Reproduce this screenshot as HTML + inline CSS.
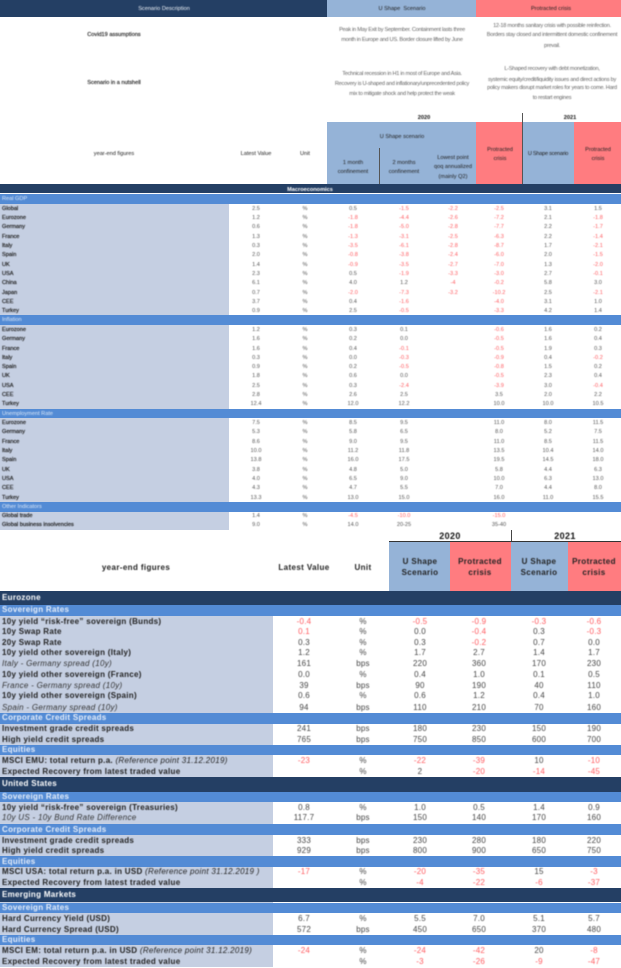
<!DOCTYPE html>
<html><head><meta charset="utf-8"><style>
html,body{margin:0;padding:0;background:#fff}
#p{position:relative;width:621px;height:968px;overflow:hidden;background:#fff;font-family:"Liberation Sans",sans-serif}
.b{position:absolute}
#t{position:absolute;left:0;top:0;width:621px;height:530px;filter:blur(.55px);font-size:5.6px;color:#555}
#s{position:absolute;left:0;top:0;width:621px;height:968px;filter:blur(.42px);font-size:8px;color:#444;letter-spacing:.22px}
.x{position:absolute;height:10px;line-height:10px;white-space:nowrap;text-align:center;width:160px;margin-left:-80px}
.q{letter-spacing:-.26px;color:#666}
.lt{position:absolute;height:10px;line-height:10px;white-space:nowrap;left:2px;color:#333}
.r{position:absolute;left:0;width:621px;height:10px}
.r span{position:absolute;top:0;height:10px;line-height:10px;white-space:nowrap;text-align:center;width:60px}
.r b{position:absolute;left:2px;top:0;line-height:10px;white-space:nowrap;font-weight:normal;color:#222}
#t .r b{-webkit-text-stroke:.2px #222}
#s .r b{font-weight:bold;color:#222;letter-spacing:.29px}
#s .r i{position:absolute;left:2px;top:0;line-height:10px;white-space:nowrap;color:#333;letter-spacing:.29px}
#s .r i em{font-style:italic;font-weight:normal}
#s .x{letter-spacing:.38px}
.a{left:226px}.c{left:275px}.d{left:323px}.e{left:374px}.f{left:423px}.g{left:469px}.h{left:518px}.k{left:568px}
.A{left:274px}.C{left:333px}.D{left:390px}.E{left:449px}.F{left:509px}.G{left:564px}
.n{color:#ff5a5f}
.W{color:#fff;font-weight:bold;letter-spacing:.3px}
</style></head><body><div id="p">

<div class="b" style="left:0;top:0;width:327px;height:17px;background:#243f64"></div>
<div class="b" style="left:327px;top:0;width:149px;height:17px;background:#95b3d7"></div>
<div class="b" style="left:476px;top:0;width:145px;height:17px;background:#ff7c80"></div>
<div class="b" style="left:327px;top:122px;width:149px;height:62px;background:#95b3d7"></div>
<div class="b" style="left:476px;top:122px;width:46px;height:62px;background:#ff7c80"></div>
<div class="b" style="left:522px;top:122px;width:52px;height:62px;background:#95b3d7"></div>
<div class="b" style="left:574px;top:122px;width:47px;height:62px;background:#ff7c80"></div>
<div class="b" style="left:521.5px;top:113px;width:1px;height:72px;background:#555"></div>
<div class="b" style="left:378.5px;top:148px;width:1px;height:37px;background:#555"></div>
<div class="b" style="left:0;top:184px;width:621px;height:9px;background:#243f64"></div>
<div class="b" style="left:0;top:204px;width:229px;height:326px;background:#c5cfe2"></div>
<div class="b" style="left:0;top:193.5px;width:621px;height:10px;background:#538bd5"></div>
<div class="b" style="left:0;top:315px;width:621px;height:9.5px;background:#538bd5"></div>
<div class="b" style="left:0;top:408.5px;width:621px;height:9.5px;background:#538bd5"></div>
<div class="b" style="left:0;top:502px;width:621px;height:9.5px;background:#538bd5"></div>

<div id="t">
<div class="x" style="left:164px;top:4px;color:#eef2f8">Scenario Description</div>
<div class="x" style="left:402px;top:4px;color:#222">U Shape&nbsp; Scenario</div>
<div class="x" style="left:551px;top:4px;color:#222">Protracted crisis</div>
<div class="x" style="left:114px;top:30px;color:#222;-webkit-text-stroke:.15px #222">Covid19 assumptions</div>
<div class="x q" style="left:402px;top:25px">Peak in May Exit by September. Containment lasts three</div>
<div class="x q" style="left:402px;top:35px">month in Europe and US. Border closure lifted by June</div>
<div class="x q" style="left:552px;top:21px">12-18 months sanitary crisis with possible reinfection.</div>
<div class="x q" style="left:552px;top:30px">Borders stay closed and intermittent domestic confinement</div>
<div class="x q" style="left:552px;top:41px">prevail.</div>
<div class="x" style="left:114px;top:78px;color:#222;-webkit-text-stroke:.15px #222">Scenario in a nutshell</div>
<div class="x q" style="left:402px;top:69px">Technical recession in H1 in most of Europe and Asia.</div>
<div class="x q" style="left:402px;top:79px">Recovery is U-shaped and inflationary/unprecedented policy</div>
<div class="x q" style="left:402px;top:89px">mix to mitigate shock and help protect the weak</div>
<div class="x q" style="left:552px;top:64px">L-Shaped recovery with debt monetization,</div>
<div class="x q" style="left:552px;top:75px">systemic equity/credit/liquidity issues and direct actions by</div>
<div class="x q" style="left:552px;top:83px">policy makers disrupt market roles for years to come. Hard</div>
<div class="x q" style="left:552px;top:93px">to restart engines</div>
<div class="x" style="left:424px;top:113px;color:#111;font-weight:bold">2020</div>
<div class="x" style="left:570px;top:113px;color:#111;font-weight:bold">2021</div>
<div class="x" style="left:402px;top:132px;color:#222">U Shape scenario</div>
<div class="x" style="left:353px;top:158px;color:#222">1 month</div>
<div class="x" style="left:353px;top:167px;color:#222">confinement</div>
<div class="x" style="left:404px;top:158px;color:#222">2 months</div>
<div class="x" style="left:404px;top:167px;color:#222">confinement</div>
<div class="x" style="left:453px;top:153px;color:#222">Lowest point</div>
<div class="x" style="left:453px;top:162px;color:#222">qoq annualized</div>
<div class="x" style="left:453px;top:172px;color:#222">(mainly Q2)</div>
<div class="x" style="left:500px;top:145px;color:#222">Protracted</div>
<div class="x" style="left:500px;top:154px;color:#222">crisis</div>
<div class="x q" style="left:548px;top:149px;color:#222">U Shape scenario</div>
<div class="x" style="left:598px;top:145px;color:#222">Protracted</div>
<div class="x" style="left:598px;top:154px;color:#222">crisis</div>
<div class="x" style="left:114px;top:149px;color:#222">year-end figures</div>
<div class="x" style="left:256px;top:149px;color:#222">Latest Value</div>
<div class="x" style="left:305px;top:149px;color:#222">Unit</div>
<div class="x" style="left:310px;top:185px;color:#fff;font-weight:bold">Macroeconomics</div>

<div class="lt" style="top:194px;color:#dce8f8">Real GDP</div>
<div class="r" style="top:204px"><b>Global</b><span class="a">2.5</span><span class="c">%</span><span class="d">0.5</span><span class="e n">-1.5</span><span class="f n">-2.2</span><span class="g n">-2.5</span><span class="h">3.1</span><span class="k">1.5</span></div>
<div class="r" style="top:213px"><b>Eurozone</b><span class="a">1.2</span><span class="c">%</span><span class="d n">-1.8</span><span class="e n">-4.4</span><span class="f n">-2.6</span><span class="g n">-7.2</span><span class="h">2.1</span><span class="k n">-1.8</span></div>
<div class="r" style="top:222px"><b>Germany</b><span class="a">0.6</span><span class="c">%</span><span class="d n">-1.8</span><span class="e n">-5.0</span><span class="f n">-2.8</span><span class="g n">-7.7</span><span class="h">2.2</span><span class="k n">-1.7</span></div>
<div class="r" style="top:232px"><b>France</b><span class="a">1.3</span><span class="c">%</span><span class="d n">-1.3</span><span class="e n">-3.1</span><span class="f n">-2.5</span><span class="g n">-6.3</span><span class="h">2.2</span><span class="k n">-1.4</span></div>
<div class="r" style="top:241px"><b>Italy</b><span class="a">0.3</span><span class="c">%</span><span class="d n">-3.5</span><span class="e n">-6.1</span><span class="f n">-2.8</span><span class="g n">-8.7</span><span class="h">1.7</span><span class="k n">-2.1</span></div>
<div class="r" style="top:250px"><b>Spain</b><span class="a">2.0</span><span class="c">%</span><span class="d n">-0.8</span><span class="e n">-3.8</span><span class="f n">-2.4</span><span class="g n">-6.0</span><span class="h">2.0</span><span class="k n">-1.5</span></div>
<div class="r" style="top:260px"><b>UK</b><span class="a">1.4</span><span class="c">%</span><span class="d n">-0.9</span><span class="e n">-3.5</span><span class="f n">-2.7</span><span class="g n">-7.0</span><span class="h">1.3</span><span class="k n">-2.0</span></div>
<div class="r" style="top:269px"><b>USA</b><span class="a">2.3</span><span class="c">%</span><span class="d">0.5</span><span class="e n">-1.9</span><span class="f n">-3.3</span><span class="g n">-3.0</span><span class="h">2.7</span><span class="k n">-0.1</span></div>
<div class="r" style="top:278px"><b>China</b><span class="a">6.1</span><span class="c">%</span><span class="d">4.0</span><span class="e">1.2</span><span class="f n">-4</span><span class="g n">-0.2</span><span class="h">5.8</span><span class="k">3.0</span></div>
<div class="r" style="top:288px"><b>Japan</b><span class="a">0.7</span><span class="c">%</span><span class="d n">-2.0</span><span class="e n">-7.3</span><span class="f n">-3.2</span><span class="g n">-10.2</span><span class="h">2.5</span><span class="k n">-2.1</span></div>
<div class="r" style="top:297px"><b>CEE</b><span class="a">3.7</span><span class="c">%</span><span class="d">0.4</span><span class="e n">-1.6</span><span class="g n">-4.0</span><span class="h">3.1</span><span class="k">1.0</span></div>
<div class="r" style="top:306px"><b>Turkey</b><span class="a">0.9</span><span class="c">%</span><span class="d">2.5</span><span class="e n">-0.5</span><span class="g n">-3.3</span><span class="h">4.2</span><span class="k">1.4</span></div>

<div class="lt" style="top:315px;color:#dce8f8">Inflation</div>
<div class="r" style="top:325px"><b>Eurozone</b><span class="a">1.2</span><span class="c">%</span><span class="d">0.3</span><span class="e">0.1</span><span class="g n">-0.6</span><span class="h">1.6</span><span class="k">0.2</span></div>
<div class="r" style="top:334px"><b>Germany</b><span class="a">1.6</span><span class="c">%</span><span class="d">0.2</span><span class="e">0.0</span><span class="g n">-0.5</span><span class="h">1.6</span><span class="k">0.4</span></div>
<div class="r" style="top:344px"><b>France</b><span class="a">1.6</span><span class="c">%</span><span class="d">0.4</span><span class="e n">-0.1</span><span class="g n">-0.5</span><span class="h">1.9</span><span class="k">0.3</span></div>
<div class="r" style="top:353px"><b>Italy</b><span class="a">0.3</span><span class="c">%</span><span class="d">0.0</span><span class="e n">-0.3</span><span class="g n">-0.9</span><span class="h">0.4</span><span class="k n">-0.2</span></div>
<div class="r" style="top:362px"><b>Spain</b><span class="a">0.9</span><span class="c">%</span><span class="d">0.2</span><span class="e n">-0.5</span><span class="g n">-0.8</span><span class="h">1.5</span><span class="k">0.2</span></div>
<div class="r" style="top:371px"><b>UK</b><span class="a">1.8</span><span class="c">%</span><span class="d">0.6</span><span class="e">0.0</span><span class="g n">-0.5</span><span class="h">2.3</span><span class="k">0.4</span></div>
<div class="r" style="top:381px"><b>USA</b><span class="a">2.5</span><span class="c">%</span><span class="d">0.3</span><span class="e n">-2.4</span><span class="g n">-3.9</span><span class="h">3.0</span><span class="k n">-0.4</span></div>
<div class="r" style="top:390px"><b>CEE</b><span class="a">2.8</span><span class="c">%</span><span class="d">2.6</span><span class="e">2.5</span><span class="g">3.5</span><span class="h">2.0</span><span class="k">2.2</span></div>
<div class="r" style="top:399px"><b>Turkey</b><span class="a">12.4</span><span class="c">%</span><span class="d">12.0</span><span class="e">12.2</span><span class="g">10.0</span><span class="h">10.0</span><span class="k">10.5</span></div>

<div class="lt" style="top:409px;color:#dce8f8">Unemployment Rate</div>
<div class="r" style="top:418px"><b>Eurozone</b><span class="a">7.5</span><span class="c">%</span><span class="d">8.5</span><span class="e">9.5</span><span class="g">11.0</span><span class="h">8.0</span><span class="k">11.5</span></div>
<div class="r" style="top:427px"><b>Germany</b><span class="a">5.3</span><span class="c">%</span><span class="d">5.8</span><span class="e">6.5</span><span class="g">8.0</span><span class="h">5.2</span><span class="k">7.5</span></div>
<div class="r" style="top:437px"><b>France</b><span class="a">8.6</span><span class="c">%</span><span class="d">9.0</span><span class="e">9.5</span><span class="g">11.0</span><span class="h">8.5</span><span class="k">11.5</span></div>
<div class="r" style="top:446px"><b>Italy</b><span class="a">10.0</span><span class="c">%</span><span class="d">11.2</span><span class="e">11.8</span><span class="g">13.5</span><span class="h">10.4</span><span class="k">14.0</span></div>
<div class="r" style="top:455px"><b>Spain</b><span class="a">13.8</span><span class="c">%</span><span class="d">16.0</span><span class="e">17.5</span><span class="g">19.5</span><span class="h">14.5</span><span class="k">18.0</span></div>
<div class="r" style="top:465px"><b>UK</b><span class="a">3.8</span><span class="c">%</span><span class="d">4.8</span><span class="e">5.0</span><span class="g">5.8</span><span class="h">4.4</span><span class="k">6.3</span></div>
<div class="r" style="top:474px"><b>USA</b><span class="a">4.0</span><span class="c">%</span><span class="d">6.5</span><span class="e">9.0</span><span class="g">10.0</span><span class="h">6.3</span><span class="k">13.0</span></div>
<div class="r" style="top:483px"><b>CEE</b><span class="a">4.3</span><span class="c">%</span><span class="d">4.7</span><span class="e">5.5</span><span class="g">7.0</span><span class="h">4.4</span><span class="k">8.0</span></div>
<div class="r" style="top:493px"><b>Turkey</b><span class="a">13.3</span><span class="c">%</span><span class="d">13.0</span><span class="e">15.0</span><span class="g">16.0</span><span class="h">11.0</span><span class="k">15.5</span></div>

<div class="lt" style="top:502px;color:#dce8f8">Other Indicators</div>
<div class="r" style="top:511px"><b>Global trade</b><span class="a">1.4</span><span class="c">%</span><span class="d n">-4.5</span><span class="e n">-10.0</span><span class="g n">-15.0</span></div>
<div class="r" style="top:520px"><b>Global business insolvencies</b><span class="a">9.0</span><span class="c">%</span><span class="d">14.0</span><span class="e">20-25</span><span class="g">35-40</span></div>
</div>

<div class="b" style="left:0;top:591px;width:273px;height:376px;background:#c5cfe2"></div>
<div class="b" style="left:389px;top:542px;width:60.5px;height:49px;background:#95b3d7"></div>
<div class="b" style="left:449.5px;top:542px;width:61px;height:49px;background:#ff7c80"></div>
<div class="b" style="left:510.5px;top:542px;width:57px;height:49px;background:#95b3d7"></div>
<div class="b" style="left:567.5px;top:542px;width:53.5px;height:49px;background:#ff7c80"></div>
<div class="b" style="left:389px;top:541px;width:232px;height:1px;background:#333"></div>
<div class="b" style="left:510.5px;top:530px;width:1px;height:11px;background:#444"></div>
<div class="b" style="left:0;top:591px;width:621px;height:13.5px;background:#243f64"></div>
<div class="b" style="left:0;top:604.5px;width:621px;height:11px;background:#538bd5"></div>
<div class="b" style="left:0;top:712.5px;width:621px;height:11px;background:#538bd5"></div>
<div class="b" style="left:0;top:744.5px;width:621px;height:10px;background:#538bd5"></div>
<div class="b" style="left:0;top:776.5px;width:621px;height:15px;background:#243f64"></div>
<div class="b" style="left:0;top:791.5px;width:621px;height:10px;background:#538bd5"></div>
<div class="b" style="left:0;top:824px;width:621px;height:10.5px;background:#538bd5"></div>
<div class="b" style="left:0;top:856px;width:621px;height:10.5px;background:#538bd5"></div>
<div class="b" style="left:0;top:887.5px;width:621px;height:14.5px;background:#243f64"></div>
<div class="b" style="left:0;top:902.5px;width:621px;height:10px;background:#538bd5"></div>
<div class="b" style="left:0;top:934.5px;width:621px;height:10px;background:#538bd5"></div>

<div id="s">
<div class="x" style="left:450px;top:531px;font-weight:bold;color:#111;font-size:9px">2020</div>
<div class="x" style="left:565px;top:531px;font-weight:bold;color:#111;font-size:9px">2021</div>
<div class="x" style="left:136px;top:563px;font-weight:bold;color:#222">year-end figures</div>
<div class="x" style="left:304px;top:563px;font-weight:bold;color:#222">Latest Value</div>
<div class="x" style="left:363px;top:563px;font-weight:bold;color:#222">Unit</div>
<div class="x" style="left:420px;top:557px;font-weight:bold;color:#222">U Shape</div>
<div class="x" style="left:420px;top:568px;font-weight:bold;color:#222">Scenario</div>
<div class="x" style="left:480px;top:557px;font-weight:bold;color:#222">Protracted</div>
<div class="x" style="left:480px;top:568px;font-weight:bold;color:#222">crisis</div>
<div class="x" style="left:539px;top:557px;font-weight:bold;color:#222">U Shape</div>
<div class="x" style="left:539px;top:568px;font-weight:bold;color:#222">Scenario</div>
<div class="x" style="left:594px;top:557px;font-weight:bold;color:#222">Protracted</div>
<div class="x" style="left:594px;top:568px;font-weight:bold;color:#222">crisis</div>

<div class="lt W" style="top:593px">Eurozone</div>
<div class="lt W" style="top:605px;color:#e6eefa">Sovereign Rates</div>
<div class="r" style="top:617px"><b>10y yield “risk-free” sovereign (Bunds)</b><span class="A n">-0.4</span><span class="C">%</span><span class="D n">-0.5</span><span class="E n">-0.9</span><span class="F n">-0.3</span><span class="G n">-0.6</span></div>
<div class="r" style="top:627px"><b>10y Swap Rate</b><span class="A n">0.1</span><span class="C">%</span><span class="D">0.0</span><span class="E n">-0.4</span><span class="F">0.3</span><span class="G n">-0.3</span></div>
<div class="r" style="top:638px"><b>20y Swap Rate</b><span class="A">0.3</span><span class="C">%</span><span class="D">0.3</span><span class="E n">-0.2</span><span class="F">0.7</span><span class="G">0.0</span></div>
<div class="r" style="top:648px"><b>10y yield other sovereign (Italy)</b><span class="A">1.2</span><span class="C">%</span><span class="D">1.7</span><span class="E">2.7</span><span class="F">1.4</span><span class="G">1.7</span></div>
<div class="r" style="top:659px"><i><em>Italy - Germany spread (10y)</em></i><span class="A">161</span><span class="C">bps</span><span class="D">220</span><span class="E">360</span><span class="F">170</span><span class="G">230</span></div>
<div class="r" style="top:670px"><b>10y yield other sovereign (France)</b><span class="A">0.0</span><span class="C">%</span><span class="D">0.4</span><span class="E">1.0</span><span class="F">0.1</span><span class="G">0.5</span></div>
<div class="r" style="top:681px"><i><em>France - Germany spread (10y)</em></i><span class="A">39</span><span class="C">bps</span><span class="D">90</span><span class="E">190</span><span class="F">40</span><span class="G">110</span></div>
<div class="r" style="top:691px"><b>10y yield other sovereign (Spain)</b><span class="A">0.6</span><span class="C">%</span><span class="D">0.6</span><span class="E">1.2</span><span class="F">0.4</span><span class="G">1.0</span></div>
<div class="r" style="top:703px"><i><em>Spain - Germany spread (10y)</em></i><span class="A">94</span><span class="C">bps</span><span class="D">110</span><span class="E">210</span><span class="F">70</span><span class="G">160</span></div>
<div class="lt W" style="top:713px;color:#e6eefa">Corporate Credit Spreads</div>
<div class="r" style="top:724px"><b>Investment grade credit spreads</b><span class="A">241</span><span class="C">bps</span><span class="D">180</span><span class="E">230</span><span class="F">150</span><span class="G">190</span></div>
<div class="r" style="top:735px"><b>High yield credit spreads</b><span class="A">765</span><span class="C">bps</span><span class="D">750</span><span class="E">850</span><span class="F">600</span><span class="G">700</span></div>
<div class="lt W" style="top:745px;color:#e6eefa">Equities</div>
<div class="r" style="top:756px"><i style="font-weight:bold;font-style:normal;color:#222">MSCI EMU: total return p.a. <em>(Reference point 31.12.2019)</em></i><span class="A n">-23</span><span class="C">%</span><span class="D n">-22</span><span class="E n">-39</span><span class="F">10</span><span class="G n">-10</span></div>
<div class="r" style="top:767px"><b>Expected Recovery from latest traded value</b><span class="C">%</span><span class="D">2</span><span class="E n">-20</span><span class="F n">-14</span><span class="G n">-45</span></div>

<div class="lt W" style="top:779px">United States</div>
<div class="lt W" style="top:792px;color:#e6eefa">Sovereign Rates</div>
<div class="r" style="top:803px"><b>10y yield “risk-free” sovereign (Treasuries)</b><span class="A">0.8</span><span class="C">%</span><span class="D">1.0</span><span class="E">0.5</span><span class="F">1.4</span><span class="G">0.9</span></div>
<div class="r" style="top:813px"><i><em>10y US - 10y Bund Rate Difference</em></i><span class="A">117.7</span><span class="C">bps</span><span class="D">150</span><span class="E">140</span><span class="F">170</span><span class="G">160</span></div>
<div class="lt W" style="top:825px;color:#e6eefa">Corporate Credit Spreads</div>
<div class="r" style="top:836px"><b>Investment grade credit spreads</b><span class="A">333</span><span class="C">bps</span><span class="D">230</span><span class="E">280</span><span class="F">180</span><span class="G">220</span></div>
<div class="r" style="top:846px"><b>High yield credit spreads</b><span class="A">929</span><span class="C">bps</span><span class="D">800</span><span class="E">900</span><span class="F">650</span><span class="G">750</span></div>
<div class="lt W" style="top:857px;color:#e6eefa">Equities</div>
<div class="r" style="top:867px"><i style="font-weight:bold;font-style:normal;color:#222">MSCI USA: total return p.a. in USD <em>(Reference point 31.12.2019 )</em></i><span class="A n">-17</span><span class="C">%</span><span class="D n">-20</span><span class="E n">-35</span><span class="F">15</span><span class="G n">-3</span></div>
<div class="r" style="top:878px"><b>Expected Recovery from latest traded value</b><span class="C">%</span><span class="D n">-4</span><span class="E n">-22</span><span class="F n">-6</span><span class="G n">-37</span></div>

<div class="lt W" style="top:890px">Emerging Markets</div>
<div class="lt W" style="top:903px;color:#e6eefa">Sovereign Rates</div>
<div class="r" style="top:914px"><b>Hard Currency Yield (USD)</b><span class="A">6.7</span><span class="C">%</span><span class="D">5.5</span><span class="E">7.0</span><span class="F">5.1</span><span class="G">5.7</span></div>
<div class="r" style="top:925px"><b>Hard Currency Spread (USD)</b><span class="A">572</span><span class="C">bps</span><span class="D">450</span><span class="E">650</span><span class="F">370</span><span class="G">480</span></div>
<div class="lt W" style="top:935px;color:#e6eefa">Equities</div>
<div class="r" style="top:946px"><i style="font-weight:bold;font-style:normal;color:#222">MSCI EM: total return p.a. in USD <em>(Reference point 31.12.2019)</em></i><span class="A n">-24</span><span class="C">%</span><span class="D n">-24</span><span class="E n">-42</span><span class="F">20</span><span class="G n">-8</span></div>
<div class="r" style="top:957px"><b>Expected Recovery from latest traded value</b><span class="C">%</span><span class="D n">-3</span><span class="E n">-26</span><span class="F n">-9</span><span class="G n">-47</span></div>
</div>

</div></body></html>
